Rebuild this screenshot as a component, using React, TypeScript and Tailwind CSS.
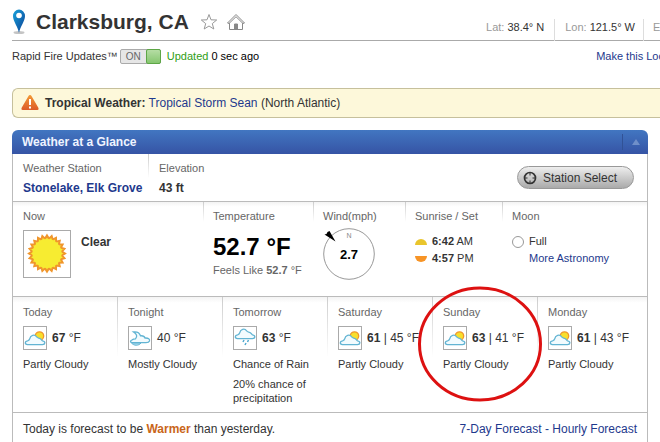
import type { ReactNode } from 'react';

type IconName = 'partly' | 'night' | 'rain';

interface Day {
  name: string;
  icon: IconName;
  high?: string;
  low?: string;
  summary: string;
  note?: string;
}

const days: Day[] = [
  { name: 'Today', icon: 'partly', high: '67', summary: 'Partly Cloudy' },
  { name: 'Tonight', icon: 'night', low: '40', summary: 'Mostly Cloudy' },
  {
    name: 'Tomorrow',
    icon: 'rain',
    high: '63',
    summary: 'Chance of Rain',
    note: '20% chance of precipitation',
  },
  { name: 'Saturday', icon: 'partly', high: '61', low: '45', summary: 'Partly Cloudy' },
  { name: 'Sunday', icon: 'partly', high: '63', low: '41', summary: 'Partly Cloudy' },
  { name: 'Monday', icon: 'partly', high: '61', low: '43', summary: 'Partly Cloudy' },
];

const CLOUD =
  'M3.5 17.6 C0.5 17.4 0.6 14.2 3.6 13.8 C5 13.4 5.4 13.2 5.8 11.6 C6.2 8.4 10.6 6.8 12.6 9.8 C13.4 11.2 14.4 11 15.6 11.4 C17.6 12 17.4 13.4 18.6 13.8 C21.8 14.4 21.4 17.5 18.5 17.6 Z';

const PinIcon = () => (
  <svg className="h-7 w-4 shrink-0" viewBox="0 0 16 28" aria-hidden="true">
    <defs>
      <linearGradient id="pin" x1="0" y1="0" x2="1" y2="1">
        <stop offset="0" stopColor="#17a3dc" />
        <stop offset="1" stopColor="#0c3f94" />
      </linearGradient>
    </defs>
    <ellipse cx="7" cy="24.5" rx="5.5" ry="1.5" fill="#c4c4c4" />
    <path d="M7 25 C6 19 1 13 1 8 A6 6.5 0 0 1 13 8 C13 13 8 19 7 25Z" fill="url(#pin)" />
    <circle cx="7" cy="7.5" r="2.8" fill="#fff" />
  </svg>
);

const SunIcon = () => {
  const points = Array.from({ length: 48 }, (_, i) => {
    const r = i % 2 === 0 ? 18 : 15;
    const a = (i * Math.PI) / 24;
    return `${23 + r * Math.sin(a)},${22.5 - r * Math.cos(a)}`;
  }).join(' ');
  return (
    <svg className="size-full" viewBox="0 0 46 46" aria-hidden="true">
      <polygon points={points} fill="#f7ec31" stroke="#f0962c" strokeWidth="2" />
      <circle cx="23" cy="22.5" r="14.5" fill="#f7ec31" />
    </svg>
  );
};

const WeatherIcon = ({ name }: { name: IconName }) => (
  <svg className="size-full" viewBox="0 0 22 22" aria-hidden="true">
    {name === 'partly' && (
      <>
        <circle cx="15.5" cy="9" r="4.2" fill="#f8df2c" stroke="#f0962c" strokeWidth="1.3" />
        <path d={CLOUD} fill="#f2fbfe" stroke="#62b4d3" strokeWidth="1.3" />
      </>
    )}
    {name === 'night' && (
      <>
        <path
          d="M4.5 5 C8 4.5 10.5 6 11.5 8.8 C14 8.5 15.5 9.5 16 11 C19.5 10.8 21 12 20.5 14 C20 15.5 18.5 15.7 17 15.7 H3 C1 15.5 1 13.6 3 13 C4 12 5 11.8 6.5 11.8 C8.5 9.5 8 7 4.5 5Z"
          fill="#f2fbfe"
          stroke="#62b4d3"
          strokeWidth="1.3"
        />
        <path d="M2.5 16 H12 C9.5 19 5 19 2.5 16Z" fill="#a9dbed" stroke="#62b4d3" />
      </>
    )}
    {name === 'rain' && (
      <>
        <path d={CLOUD} transform="translate(0 -6)" fill="#f2fbfe" stroke="#62b4d3" strokeWidth="1.3" />
        <path d="M10 13 l-1 2 M14.5 13 l-1 2 M12 16 l-1 2" stroke="#4fa8cf" strokeWidth="1.5" />
      </>
    )}
  </svg>
);

const WindDial = () => (
  <svg className="absolute inset-0 size-full overflow-visible" viewBox="0 0 52 52" aria-hidden="true">
    <circle cx="26" cy="26" r="25.3" fill="none" stroke="#999" />
    <path d="M1.5 6.5 L3.5 6 L4.5 4 L6.5 3 L12.5 13.5 Z" fill="#000" />
  </svg>
);

// Column with a short divider that fades out below its label
const Cell = ({ className = '', line = 'h-6', last = false, children }: {
  className?: string;
  line?: string;
  last?: boolean;
  children: ReactNode;
}) => (
  <div className={`flex ${className}`}>
    <div className="min-w-0 flex-1">{children}</div>
    {!last && <div className={`w-px shrink-0 bg-linear-to-b from-[#ccc] to-white ${line}`} />}
  </div>
);

const Label = ({ children }: { children: ReactNode }) => (
  <h3 className="text-[11px] leading-4 text-[#666]">{children}</h3>
);

const Header = () => (
  <header className="pl-3">
    <div className="flex items-end justify-between border-b border-[#aaa]">
      <div className="flex items-center pt-2 pb-1">
        <PinIcon />
        <h1 className="ml-2 text-[21px] leading-7 font-bold text-[#333]">Clarksburg, CA</h1>
        <button type="button" aria-label="Add to favorites" className="ml-[11px]">
          <svg className="size-[18px]" viewBox="0 0 18 18" fill="#fff" stroke="#999">
            <path d="M9 1.5 L11 6.8 L16.7 7 L12.3 10.6 L13.8 16 L9 13 L4.2 16 L5.7 10.6 L1.3 7 L7 6.8Z" />
          </svg>
        </button>
        <button type="button" aria-label="Set as home" className="ml-2">
          <svg className="size-5" viewBox="0 0 20 20" fill="#fff" stroke="#888">
            <path d="M3.5 10 V17.5 H16.5 V10" />
            <path d="M1.5 11 L10 2.5 L18.5 11 L17 11.5 L10 4.7 L3 11.5Z" />
            <path d="M8.5 17.5 V12 H11.5 V17.5Z" fill="#888" />
          </svg>
        </button>
      </div>
      <dl className="flex text-[11px] leading-4 whitespace-nowrap text-[#333]">
        <div className="flex gap-[3px] pr-[10px]">
          <dt className="text-[#999]">Lat:</dt>
          <dd>38.4° N</dd>
        </div>
        <div className="-mb-px flex h-[22px] gap-[3px] border-l border-[#ddd] pr-2 pl-[10px]">
          <dt className="text-[#999]">Lon:</dt>
          <dd>121.5° W</dd>
        </div>
        <div className="-mb-px h-[22px] w-[17px] border-l border-[#ddd] pl-[9px]">
          <dt className="text-[#999]">E</dt>
        </div>
      </dl>
    </div>
    <div className="flex items-center justify-between pt-[7px] text-[11px] leading-4 whitespace-nowrap">
      <div className="flex items-center">
        <span className="text-[#333]">Rapid Fire Updates™</span>
        <button
          type="button"
          aria-pressed="true"
          className="ml-[2px] flex h-[15px] w-[41px] rounded-xs border border-[#aaa] bg-[#e6e6e6] text-[10px] leading-[13px] text-[#666]"
        >
          <span className="flex-1">ON</span>
          <span className="-my-px -mr-px h-[15px] w-[15px] rounded-xs border border-[#5da646] bg-linear-to-b from-[#b5dda4] to-[#86c66f]" />
        </button>
        <span className="ml-[6px] text-black">
          <span className="text-[#2f9e15]">Updated</span> 0 sec ago
        </span>
      </div>
      <a href="#" className="-mr-1 text-[#1e398d]">Make this Loc</a>
    </div>
  </header>
);

const Alert = () => (
  <div className="mt-6 ml-3 flex h-[30px] items-center rounded-l-md border-y border-l border-[#c6c09c] bg-[#fdf8da] pl-2 text-xs text-[#333]">
    <svg className="mr-[6px] h-[18px] w-[18px]" viewBox="0 0 18 18" aria-hidden="true">
      <defs>
        <linearGradient id="warn" x1="0" y1="0" x2="0" y2="1">
          <stop offset="0" stopColor="#f39a35" />
          <stop offset="1" stopColor="#dc5a27" />
        </linearGradient>
      </defs>
      <path d="M9 1 Q10 1 10.5 2 L17.5 14 Q18 16 16.5 16 H1.5 Q0 16 0.5 14 L7.5 2 Q8 1 9 1Z" fill="url(#warn)" />
      <path d="M9 5 V11 M9 12.5 V14.5" stroke="#fff" strokeWidth="2" />
    </svg>
    <p>
      <b>Tropical Weather:</b> <a href="#" className="text-[#1e398d]">Tropical Storm Sean</a> (North Atlantic)
    </p>
  </div>
);

const StationRow = () => (
  <div className="flex h-12 border-b border-[#bbb] pl-[10px]">
    <Cell className="w-[126px]">
      <div className="pt-[6px]">
        <Label>Weather Station</Label>
        <a href="#" className="mt-1 block text-xs font-bold whitespace-nowrap text-[#1e398d]">Stonelake, Elk Grove</a>
      </div>
    </Cell>
    <div className="flex-1 pt-[6px] pl-[10px]">
      <Label>Elevation</Label>
      <p className="mt-1 text-xs font-bold">43 ft</p>
    </div>
    <button
      type="button"
      className="mt-3 mr-[13px] flex h-[23px] w-[117px] items-center rounded-full border border-[#999] bg-linear-to-b from-[#eee] to-[#aaa] pl-[5px] text-xs whitespace-nowrap text-[#333]"
    >
      <svg className="mr-[6px] size-[14px]" viewBox="0 0 14 14" fill="none" stroke="#333" aria-hidden="true">
        <circle cx="7" cy="7" r="5.5" strokeWidth="1.7" />
        <path d="M7 2 V4.5 M7 9.5 V12 M2 7 H4.5 M9.5 7 H12" />
      </svg>
      Station Select
    </button>
  </div>
);

const NowRow = () => (
  <div className="flex h-[95px] border-b border-[#bbb] bg-linear-to-b from-[#f3f3f3] to-white to-5% pl-[10px]">
    <Cell className="w-[181px]" line="h-5">
      <div className="pt-[6px]">
        <Label>Now</Label>
        <div className="mt-[6px] flex gap-[10px]">
          <div className="size-12 border border-[#aaa] bg-white">
            <SunIcon />
          </div>
          <p className="pt-1 text-xs font-bold">Clear</p>
        </div>
      </div>
    </Cell>
    <Cell className="w-[110px] pl-[9px]" line="h-5">
      <div className="pt-[6px] whitespace-nowrap">
        <Label>Temperature</Label>
        <p className="mt-[11px] text-2xl leading-6 font-bold text-black">52.7 °F</p>
        <p className="mt-[3px] text-[11px] leading-4 text-[#666]">
          Feels Like <b>52.7</b> °F
        </p>
      </div>
    </Cell>
    <Cell className="w-[92px] pl-[9px]" line="h-5">
      <div className="pt-[6px]">
        <Label>Wind(mph)</Label>
        <div className="relative mt-1 flex size-[52px] flex-col items-center">
          <WindDial />
          <span className="pt-1 text-[7px] leading-2 text-[#888]">N</span>
          <b className="mt-[7px] text-[13px] leading-4 text-black">2.7</b>
        </div>
      </div>
    </Cell>
    <Cell className="w-[97px] pl-[9px]" line="h-5">
      <div className="pt-[6px] text-[11px] leading-[17px] whitespace-nowrap">
        <Label>Sunrise / Set</Label>
        <p className="mt-[9px] flex items-center gap-[5px]">
          <span className="h-[6px] w-3 rounded-t-full bg-[#e9c52c]" />
          <span><b>6:42</b> AM</span>
        </p>
        <p className="flex items-center gap-[5px]">
          <span className="h-[6px] w-3 rounded-b-full bg-[#f79426]" />
          <span><b>4:57</b> PM</span>
        </p>
      </div>
    </Cell>
    <div className="flex-1 pt-[6px] pl-[9px] text-[11px] leading-[17px] whitespace-nowrap">
      <Label>Moon</Label>
      <p className="mt-[9px] flex items-center gap-[5px]">
        <span className="size-3 rounded-full border border-[#999]" />
        Full
      </p>
      <a href="#" className="ml-[17px] text-[#1e398d]">More Astronomy</a>
    </div>
  </div>
);

const DayColumn = ({ day, last }: { day: Day; last: boolean }) => (
  <Cell className="min-w-0" line="h-15" last={last}>
    <div className="pt-[7px] pl-[10px] text-[11px] leading-[14px]">
      <Label>{day.name}</Label>
      <div className="mt-[6px] flex items-center gap-[5px] text-xs whitespace-nowrap">
        <div className="size-6 shrink-0 border border-[#aaa] bg-white">
          <WeatherIcon name={day.icon} />
        </div>
        <span>
          {day.high && <b>{day.high}</b>}
          {day.high && day.low && ' | '}
          {day.low} °F
        </span>
      </div>
      <p className="mt-[7px] whitespace-nowrap">{day.summary}</p>
      {day.note && <p className="mt-[6px]">{day.note}</p>}
    </div>
  </Cell>
);

const ForecastRow = () => (
  <div className="relative grid h-[116px] grid-cols-6 border-b border-[#bbb] bg-linear-to-b from-[#f3f3f3] to-white to-5% pr-1">
    {days.map((day, i) => (
      <DayColumn key={day.name} day={day} last={i === days.length - 1} />
    ))}
    {/* hand-drawn ring over Sunday */}
    <svg className="absolute -top-[12px] left-[404px] h-[118px] w-[126px]" viewBox="0 0 126 118" aria-hidden="true">
      <ellipse cx="63" cy="59" rx="60.5" ry="56" fill="none" stroke="#dd1111" strokeWidth="3" />
    </svg>
  </div>
);

export default function App() {
  return (
    <main className="overflow-hidden bg-white font-['Liberation_Sans',Arial,sans-serif] text-[#333]">
      <Header />
      <Alert />
      <section className="mx-3 mt-3">
        <div className="flex h-6 items-center justify-between rounded-t-md bg-linear-to-b from-[#4276c1] to-[#3654a5]">
          <h2 className="pl-[10px] text-xs font-bold text-[#f0f4ff]">Weather at a Glance</h2>
          <button type="button" aria-label="Collapse" className="flex h-4 w-[26px] items-center justify-center border-l border-[#315296]">
            <svg className="h-[6px] w-2" viewBox="0 0 8 6">
              <path d="M4 0 L8 6 H0Z" fill="#6f8fc9" />
            </svg>
          </button>
        </div>
        <div className="border-x border-[#bbb]">
          <StationRow />
          <NowRow />
          <ForecastRow />
          <div className="flex h-8 items-center justify-between px-[10px] text-xs whitespace-nowrap">
            <p>
              Today is forecast to be <b className="text-[#c9661a]">Warmer</b> than yesterday.
            </p>
            <p className="text-[#1e398d]">
              <a href="#">7-Day Forecast</a> - <a href="#">Hourly Forecast</a>
            </p>
          </div>
        </div>
      </section>
    </main>
  );
}
